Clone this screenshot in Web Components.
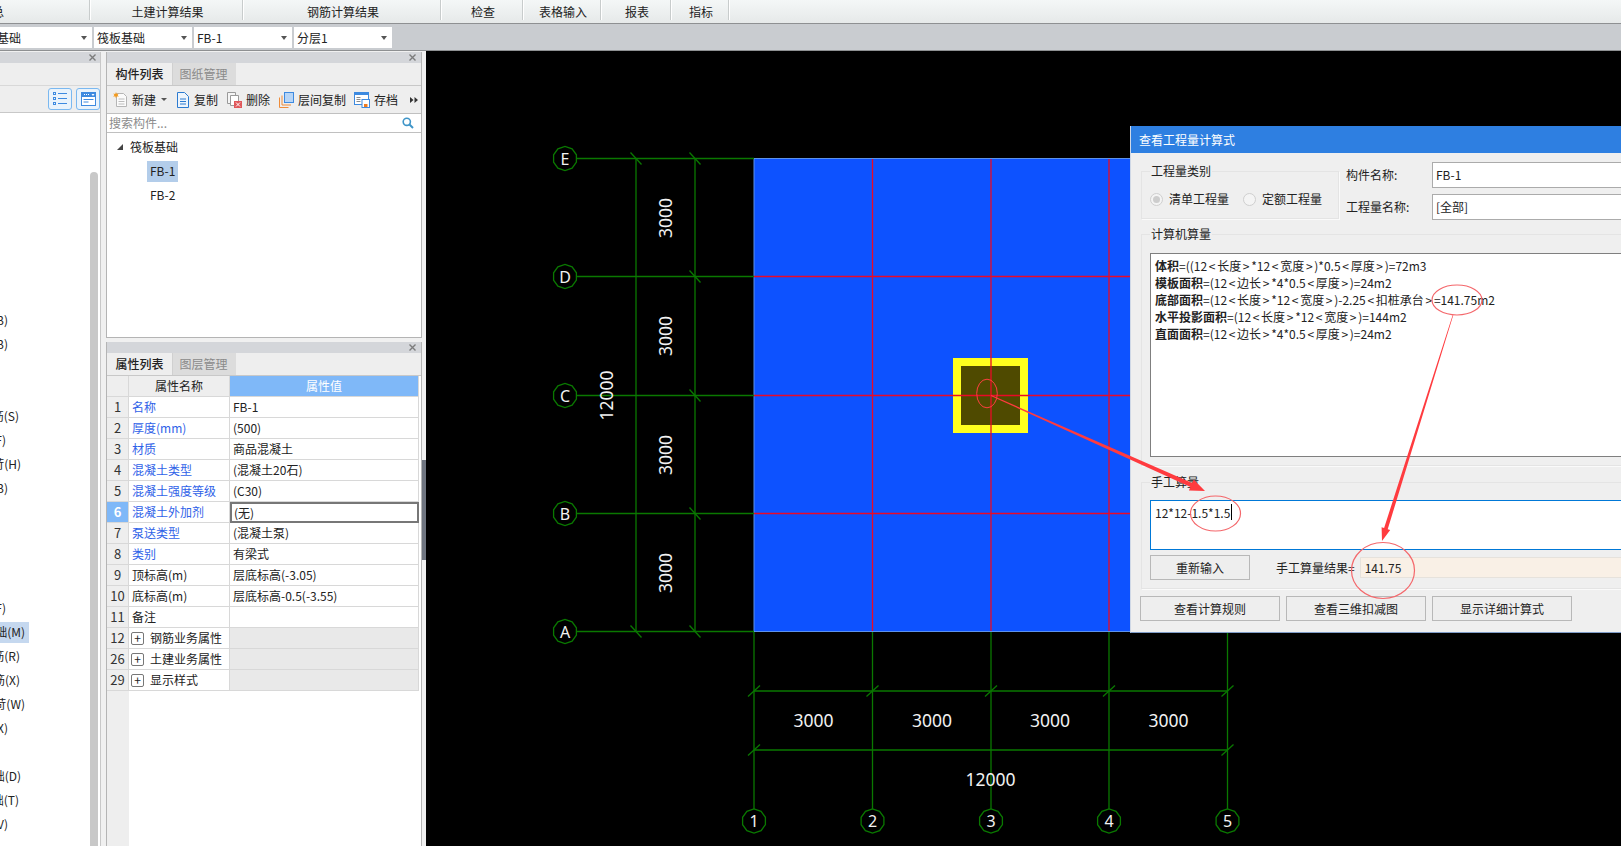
<!DOCTYPE html>
<html lang="zh">
<head>
<meta charset="utf-8">
<title>查看工程量计算式</title>
<style>
  html, body { margin: 0; height: 100%; overflow: hidden; }
  body { font: 12px/16px "Noto Sans CJK SC", "Noto Sans", sans-serif; color: #222; }
</style>
</head>
<body>
<app-shell></app-shell>

<script>
const ICONS = {
  add: `<svg width="16" height="16" viewBox="0 0 16 16"><path d="M3.5 1.5h7l3 3v10h-10z" fill="#fbfbfb" stroke="#b5b5b5"/><path d="M5.5 7h6M5.5 9.5h6M5.5 12h6" stroke="#bcbcbc"/><path d="M3 0l.8 2 2-.6-1.2 1.7 1.2 1.7-2-.6-.8 2-.8-2-2 .6 1.200-1.700-1.200-1.700 2 .6z" fill="#f39a1e"/></svg>`,
  copy: `<svg width="14" height="16" viewBox="0 0 14 16"><path d="M1.500 .5h7l4 4v11h-11z" fill="#eef5fc" stroke="#2c7bd0"/><path d="M4 7h6M4 9.500h6M4 12h6" stroke="#2c7bd0"/></svg>`,
  del: `<svg width="15" height="16" viewBox="0 0 15 16"><path d="M.5 .5h8v11h-8z" fill="#f5f5f5" stroke="#9a9a9a"/><path d="M3.500 3.500h8v10h-8z" fill="#fff" stroke="#9a9a9a"/><rect x="7" y="9" width="8" height="7" fill="#e0575a"/><path d="M9 10.500l4 4M13 10.500l-4 4" stroke="#fff"/></svg>`,
  floor: `<svg width="15" height="16" viewBox="0 0 15 16"><path d="M.5 5.500v10h9" fill="none" stroke="#ee8c3a"/><path d="M3 3.500v9.500h9" fill="none" stroke="#ee8c3a"/><rect x="5.500" y=".5" width="9" height="10" fill="#b7d5f6" stroke="#3d8ae0"/></svg>`,
  save: `<svg width="16" height="16" viewBox="0 0 16 16"><rect x=".5" y=".5" width="14" height="12" fill="#fff" stroke="#3d8ae0"/><rect x="0" y="0" width="15" height="3" fill="#3d8ae0"/><path d="M2.500 5.500h4M2.500 7.500h4M2.500 9.500h4" stroke="#8a8a8a"/><rect x="8" y="7.500" width="7.500" height="8" fill="#fff" stroke="#3d8ae0"/><rect x="10" y="12" width="3.500" height="3" fill="#ee7a1e"/></svg>`,
  search: `<svg width="12" height="12" viewBox="0 0 12 12"><circle cx="4.800" cy="4.800" r="3.600" fill="none" stroke="#3f95c8" stroke-width="1.600"/><path d="M7.500 7.500l3.500 3.500" stroke="#3f95c8" stroke-width="2"/></svg>`,
  list: `<svg width="14" height="14" viewBox="0 0 14 14" fill="none" stroke="#3d8ae0"><rect x=".5" y=".5" width="2" height="2"/><rect x=".5" y="5.500" width="2" height="2"/><rect x=".5" y="10.500" width="2" height="2"/><path d="M5 1.500h9M5 6.500h9M5 11.500h9"/></svg>`,
  win: `<svg width="15" height="14" viewBox="0 0 15 14"><rect x=".5" y=".5" width="14" height="13" fill="#fff" stroke="#3d8ae0"/><rect x="1" y="1" width="13" height="4" fill="#3d8ae0"/><path d="M3 2.500h1M5 2.500h1M7 2.500h1" stroke="#fff"/><path d="M10.500 2h3l-1.500 2z" fill="#fff"/><path d="M2.500 7.500h10M2.500 10h5" stroke="#3d8ae0"/></svg>`,
  close: `<svg width="7" height="7" viewBox="0 0 7 7"><path d="M.5 .5l6 6M6.500 .5l-6 6" stroke="#7c7c7c" stroke-width="1.400"/></svg>`,
  more: `<svg width="8" height="6" viewBox="0 0 8 6"><path d="M0 0l3.500 3-3.500 3zM4.500 0l3.500 3-3.500 3z" fill="#333"/></svg>`
}

class TopTabs extends HTMLElement {
  connectedCallback () {
    const tabs = [['总', 90, 'lead'], ['土建计算结果', 153], ['钢筋计算结果', 198], ['检查', 82], ['表格输入', 78], ['报表', 70], ['指标', 58]]
    this.attachShadow({ mode: 'open' }).innerHTML = `
      <style>
        :host { display: flex; height: 23px; border-bottom: 1px solid #8e9092;
          background: linear-gradient(#f4f7f7, #e6e9e9); overflow: hidden; }
        .tab { box-sizing: border-box; height: 20px; display: flex; align-items: center; justify-content: center;
          padding-top: 4px; padding-left: 3px; border-right: 1px solid #c8cccc; box-shadow: 1px 0 0 #fff; flex: none; }
        .lead { justify-content: flex-end; padding-right: 85px; padding-left: 0; }
      </style>
      ${tabs.map(t => `<div class="tab ${t[2] || ''}" style="width:${t[1]}px">${t[0]}</div>`).join('')}`
  }
}
customElements.define('top-tabs', TopTabs)

class SelectBar extends HTMLElement {
  connectedCallback () {
    const items = [['基础', 92, -3], ['筏板基础', 98, 3], ['FB-1', 98, 3], ['分层1', 98, 3]]
    this.attachShadow({ mode: 'open' }).innerHTML = `
      <style>
        :host { display: flex; gap: 2px; height: 26px; box-sizing: content-box; padding: 0; align-items: flex-start;
          background: #c9ccd0; border-bottom: 1px solid #8e9092; overflow: hidden; }
        .box { box-sizing: border-box; flex: none; height: 21px; margin-top: 3px; background: #fff; display: flex; align-items: center;
          justify-content: space-between; padding-right: 5px; }
        i { width: 0; height: 0; border: 3.500px solid transparent; border-top: 4px solid #555; border-bottom: 0; }
      </style>
      ${items.map(s => `<div class="box" style="width:${s[1]}px"><span style="margin-left:${s[2]}px">${s[0]}</span><i></i></div>`).join('')}`
  }
}
customElements.define('select-bar', SelectBar)

class DockPanel extends HTMLElement {
  connectedCallback () {
    const tabs = (this.getAttribute('tabs') || '').split(',').filter(Boolean)
    this.attachShadow({ mode: 'open' }).innerHTML = `
      <style>
        :host { display: flex; flex-direction: column; box-sizing: border-box; overflow: hidden;
          border-left: 1px solid #b4b4b4; border-right: 1px solid #b4b4b4; background: #fff; }
        .head { height: 11px; flex: none; background: #d4d6da; display: flex; align-items: center; justify-content: flex-end; padding-right: 5px; }
        .tabs { height: 22px; flex: none; background: #eee; display: flex; border-bottom: 1px solid #c8c8c8; }
        .tab { width: 65px; display: flex; align-items: center; justify-content: center; font-weight: 500; }
        .tab + .tab { background: #dcdcdc; color: #8a8a8a; font-weight: 400; width: 64px; border-left: 1px solid #d0d0d0; padding-right: 2px; box-sizing: border-box; }
        .body { flex: 1; min-height: 0; display: flex; flex-direction: column; }
      </style>
      <div class="head">${ICONS.close}</div>
      <div class="tabs">${tabs.map(t => `<div class="tab">${t}</div>`).join('')}</div>
      <div class="body"><slot></slot></div>`
  }
}
customElements.define('dock-panel', DockPanel)

class ComponentTools extends HTMLElement {
  connectedCallback () {
    const tools = [
      [ICONS.add, '新建', 6, 3], [ICONS.copy, '复制', 9, 4], [ICONS.del, '删除', 9, 4],
      [ICONS.floor, '层间复制', 9, 4], [ICONS.save, '存档', 8, 4]
    ]
    this.attachShadow({ mode: 'open' }).innerHTML = `
      <style>
        :host { display: flex; align-items: center; flex: none; height: 27px; background: #eee; border-bottom: 1px solid #c0c0c0; overflow: hidden; }
        .tool { display: flex; align-items: center; flex: none; }
        svg { flex: none; }
        .drop { width: 0; height: 0; border: 3px solid transparent; border-top: 3px solid #555; border-bottom: 0; margin-left: 5px; }
        .more { margin-left: 12px; display: flex; }
      </style>
      ${tools.map((t, i) => `<div class="tool" style="margin-left:${t[2]}px">${t[0]}<span style="margin-left:${t[3]}px">${t[1]}</span>${i === 0 ? '<i class="drop"></i>' : ''}</div>`).join('')}
      <span class="more">${ICONS.more}</span>`
  }
}
customElements.define('component-tools', ComponentTools)

class SearchBox extends HTMLElement {
  connectedCallback () {
    this.attachShadow({ mode: 'open' }).innerHTML = `
      <style>
        :host { display: flex; align-items: center; justify-content: space-between; flex: none; height: 18px; padding: 0 7px 0 2px;
          background: #fff; border-bottom: 1px solid #c0c0c0; color: #8c8c8c; }
      </style>
      <span>搜索构件...</span>${ICONS.search}`
  }
}
customElements.define('search-box', SearchBox)

class ComponentTree extends HTMLElement {
  connectedCallback () {
    this.attachShadow({ mode: 'open' }).innerHTML = `
      <style>
        :host { display: block; flex: 1; padding-top: 2px; background: #fff; border-bottom: 1px solid #b4b4b4; }
        .row { height: 24px; display: flex; align-items: center; }
        .root { padding-left: 10px; gap: 7px; }
        .root i { width: 0; height: 0; border-left: 6px solid transparent; border-bottom: 6px solid #444; }
        .leaf { padding-left: 40px; }
        .leaf span { display: flex; align-items: center; height: 21px; padding: 0 3px; }
        .on { background: #b3cdea; }
      </style>
      <div class="row root"><i></i><span>筏板基础</span></div>
      <div class="row leaf"><span class="on">FB-1</span></div>
      <div class="row leaf"><span>FB-2</span></div>`
  }
}
customElements.define('component-tree', ComponentTree)

class PropTable extends HTMLElement {
  constructor () {
    super()
    this.data = [
      ['1', '名称', 'FB-1', 1], ['2', '厚度(mm)', '(500)', 1], ['3', '材质', '商品混凝土', 1],
      ['4', '混凝土类型', '(混凝土20石)', 1], ['5', '混凝土强度等级', '(C30)', 1], ['6', '混凝土外加剂', '(无)', 1],
      ['7', '泵送类型', '(混凝土泵)', 1], ['8', '类别', '有梁式', 1], ['9', '顶标高(m)', '层底标高(-3.05)'],
      ['10', '底标高(m)', '层底标高-0.5(-3.55)'], ['11', '备注', '']
    ]
    this.groups = [['12', '钢筋业务属性'], ['26', '土建业务属性'], ['29', '显示样式']]
  }

  connectedCallback () {
    const rows = this.data.map(r => `
      <div class="no ${r[0] === '6' ? 'cur' : ''}">${r[0]}</div>
      <div class="cell ${r[3] ? 'link' : ''}">${r[1]}</div>
      <div class="cell val ${r[0] === '6' ? 'edit' : ''}">${r[2]}</div>`).join('')
    const groups = this.groups.map(g => `
      <div class="no">${g[0]}</div>
      <div class="cell grp"><b>+</b>${g[1]}</div>
      <div class="cell val shade"></div>`).join('')
    this.attachShadow({ mode: 'open' }).innerHTML = `
      <style>
        :host { display: block; flex: 1; background: linear-gradient(90deg, #eee 22px, #fff 22px); overflow: hidden; }
        .grid { display: grid; grid-template-columns: 22px 101px 189px; grid-auto-rows: 21px; width: 312px; }
        .grid > div { box-sizing: border-box; display: flex; align-items: center; border-bottom: 1px solid #d8d8d8; border-right: 1px solid #d8d8d8; white-space: nowrap; }
        .no { justify-content: center; background: #eee; color: #333; font-size: 13px; }
        .cur { background: #7fb8f8; color: #fff; font-weight: 700; }
        .cell { padding-left: 3px; }
        .val { padding-left: 3px; }
        .link { color: #2f62e8; }
        .hd { justify-content: center; background: #eee; padding: 0; }
        .hd.blue { background: #7fb8f8; color: #fff; }
        .edit { border: 2px solid #777 !important; padding-left: 2px; }
        .shade { background: #e9e9e9; }
        .grp { gap: 6px; padding-left: 2px; }
        .grp b { box-sizing: border-box; width: 13px; height: 13px; border: 1px solid #777; border-radius: 2px; display: flex;
          align-items: center; justify-content: center; font-weight: 400; line-height: 1; background: #fff; }
      </style>
      <div class="grid">
        <div class="no"></div><div class="hd">属性名称</div><div class="hd blue">属性值</div>
        ${rows}${groups}
      </div>`
  }
}
customElements.define('prop-table', PropTable)

class LeftPanel extends HTMLElement {
  connectedCallback () {
    const items = [
      ['B)', 8], ['B)', 8], ['', 0], ['', 0], ['筋(S)', 19], ['F)', 6], ['苛(H)', 21], ['B)', 8], ['', 0], ['', 0], ['', 0], ['', 0],
      ['F)', 6], ['础(M)', 25, 1], ['筋(R)', 20], ['筋(X)', 20], ['苛(W)', 25], ['X)', 8], ['', 0], ['础(D)', 21], ['础(T)', 19], ['V)', 8]
    ]
    this.attachShadow({ mode: 'open' }).innerHTML = `
      <style>
        :host { display: flex; flex-direction: column; flex: none; width: 101px; margin-top: 1px; background: #fff; overflow: hidden; border-right: 1px solid #c8c8c8; box-sizing: border-box; }
        .head { height: 11px; flex: none; background: #d4d6da; display: flex; align-items: center; justify-content: flex-end; padding-right: 4px; }
        .tabs { height: 22px; flex: none; background: #eee; }
        .tools { flex: none; background: #eee; border-bottom: 1px solid #c8c8c8; border-top: 1px solid #d8d8d8; box-sizing: border-box; height: 28px;
          display: flex; align-items: center; justify-content: flex-end; gap: 4px; }
        .btn { box-sizing: border-box; width: 24px; height: 22px; border: 1px solid #7ab8f0; border-radius: 3px; background: #e9f3fc; display: flex; align-items: center; justify-content: center; }
        .main { flex: 1; min-height: 0; display: flex; }
        .list { flex: 1; padding-top: 195px; overflow: hidden; }
        .row { height: 24px; display: flex; align-items: center; }
        .item { box-sizing: border-box; display: flex; justify-content: flex-end; white-space: nowrap; height: 21px; align-items: center; padding-bottom: 1px; }
        .on { background: #c5d8ef; padding-right: 4px; }
        .track { width: 8px; flex: none; margin: 59px 2px 0 0; background: #c8c8c8; border-radius: 4px 4px 0 0; }
      </style>
      <div class="head">${ICONS.close}</div>
      <div class="tabs"></div>
      <div class="tools"><div class="btn">${ICONS.list}</div><div class="btn">${ICONS.win}</div></div>
      <div class="main">
        <div class="list">
          ${items.map(i => `<div class="row">${i[0] ? `<div class="item ${i[2] ? 'on' : ''}" style="width:${i[2] ? 29 : i[1]}px">${i[0]}</div>` : ''}</div>`).join('')}
        </div>
        <div class="track"></div>
      </div>`
  }
}
customElements.define('left-panel', LeftPanel)

class CadDrawing extends HTMLElement {
  connectedCallback () {
    const xs = [754, 872.5, 991, 1109, 1227.5]
    const ys = [158.5, 276.5, 395.5, 513.5, 631.5]
    const green = '#0a7800'
    const red = '#ea0a26'
    const line = (a, b, c, d, col = green, w = 1.3) => `<line x1="${a}" y1="${b}" x2="${c}" y2="${d}" stroke="${col}" stroke-width="${w}"/>`
    const poly = (cx, cy) => {
      const pts = []
      for (let i = 0; i < 10; i++) {
        const t = Math.PI * 2 * (i + 0.5) / 10
        pts.push((cx + 12 * Math.cos(t)).toFixed(1) + ',' + (cy + 12 * Math.sin(t)).toFixed(1))
      }
      return `<polygon points="${pts.join(' ')}" fill="#000" stroke="${green}" stroke-width="1.300"/>`
    }
    const label = (x, y, t, size = 17.500, rot) =>
      `<text x="${x}" y="${y}" font-size="${size}" fill="#f2f2f2" text-anchor="middle" dominant-baseline="central"${rot ? ` transform="rotate(-90 ${x} ${y})"` : ''}>${t}</text>`

    let s = ''
    // base slab
    s += `<rect x="754" y="158.500" width="473.500" height="473" fill="#0d52ff" stroke="#5d92ea"/>`
    // column goes under the axes
    s += `<rect x="953" y="358" width="75" height="75" fill="#ffff1e"/><rect x="961" y="366" width="59" height="59" fill="#4f4a00"/>`
    // axes inside the slab
    ys.slice(1, 4).forEach(y => { s += line(754, y, 1227, y, red) })
    xs.slice(1, 4).forEach(x => { s += line(x, 159, x, 631, red) })
    s += `<ellipse cx="987" cy="393.500" rx="10.300" ry="14.300" fill="none" stroke="#ff4040"/>`
    // axes outside
    ys.forEach(y => { s += line(577, y, 754, y) })
    xs.forEach(x => { s += line(x, 632, x, 809) })
    s += line(636, 158, 636, 632) + line(695, 158, 695, 632)
    s += line(754, 691, 1228, 691) + line(754, 750, 1228, 750)
    // dimension ticks
    const back = (x, y) => line(x - 5.5, y - 6, x + 5.5, y + 6)
    const fwd = (x, y) => line(x - 6, y + 5.5, x + 6, y - 5.5)
    ;[[636, ys[0]], [636, ys[4]]].forEach(p => { s += back(p[0], p[1]) })
    ys.forEach(y => { s += back(695, y) })
    xs.forEach(x => { s += fwd(x, 691) })
    s += fwd(xs[0], 750) + fwd(xs[4], 750)
    // bubbles
    ;['E', 'D', 'C', 'B', 'A'].forEach((t, i) => { s += poly(565, ys[i]) + label(565, ys[i], t, 16) })
    xs.forEach((x, i) => { s += poly(x, 821) + label(x, 821, i + 1, 16) })
    // dimensions
    ;[218, 336, 455, 573].forEach(y => { s += label(664.5, y, '3000', 17.5, true) })
    s += label(605.5, 395.5, '12000', 17.5, true)
    ;[813.5, 932, 1050, 1168.5].forEach(x => { s += label(x, 719.5, '3000') })
    s += label(990.5, 779, '12000')

    this.attachShadow({ mode: 'open' }).innerHTML = `
      <style>
        :host { display: block; position: absolute; inset: 0; }
        svg { display: block; font-family: "Noto Sans", sans-serif; }
      </style>
      <svg width="1195" height="795" viewBox="426 51 1195 795">${s}</svg>`
  }
}
customElements.define('cad-drawing', CadDrawing)

class CalcDialog extends HTMLElement {
  connectedCallback () {
    const lines = [
      ['体积', '=((12<长度>*12<宽度>)*0.5<厚度>)=72m3'],
      ['模板面积', '=(12<边长>*4*0.5<厚度>)=24m2'],
      ['底部面积', '=(12<长度>*12<宽度>)-2.25<扣桩承台>=141.75m2'],
      ['水平投影面积', '=(12<长度>*12<宽度>)=144m2'],
      ['直面面积', '=(12<边长>*4*0.5<厚度>)=24m2']
    ]
    // the angle brackets sit wider in the original font
    const esc = t => t.replace(/[<>]/g, c => `<u>${c === '<' ? '&lt;' : '&gt;'}</u>`)
    this.attachShadow({ mode: 'open' }).innerHTML = `
      <style>
        :host { display: block; position: absolute; left: 704px; top: 75px; width: 600px; background: #efefef;
          border-left: 1px solid #cfd8e6; border-bottom: 1px solid #7f9cc8; box-sizing: border-box; }
        .title { height: 27px; background: #2e7fe1; color: #fff; display: flex; align-items: center; padding-left: 8px; }
        .body { padding: 9px 0 11px 10px; }
        fieldset { margin: 0; min-width: 0; border: 1px solid #e4e4e4; box-shadow: 1px 1px 0 #fafafa; padding: 0 0 8px 8px; }
        legend { padding: 0 1px; height: 16px; line-height: 16px; }
        .top { display: flex; height: 57px; }
        .kind { width: 198px; box-sizing: border-box; height: 56px; margin-top: 1px; flex: none; }
        .radios { display: flex; align-items: center; padding-top: 12px; }
        .radio { box-sizing: border-box; width: 13px; height: 13px; flex: none; border-radius: 50%; border: 1px solid #cfcfcf; background: #f4f4f4;
          display: flex; align-items: center; justify-content: center; margin-right: 6px; }
        .radio.on::after { content: ''; width: 7px; height: 7px; border-radius: 50%; background: #cdcdcd; }
        .names { display: grid; grid-template-columns: 86px 1fr; grid-auto-rows: 26px; row-gap: 6px; margin-left: 7px; flex: 1; align-items: center; }
        .field { box-sizing: border-box; height: 26px; background: #fff; border: 1px solid #ababab; display: flex; align-items: center; padding-left: 3px; }
        .auto { margin-top: 7px; }
        .out { box-sizing: border-box; height: 204px; margin-top: 11px; background: #fff; border: 1px solid #7f7f7f; border-right: 0; padding: 3px 4px; line-height: 17px; }
        .out b { font-weight: 700; }
        .out u { text-decoration: none; margin: 0 1.700px; }
        .hand { margin-top: 8px; }
        .in { box-sizing: border-box; height: 50px; margin-top: 10px; background: #fff; border: 1px solid #0078d7; padding: 3px 4px; line-height: 17px; display: flex; align-items: flex-start; }
        .caret { display: inline-block; width: 1px; height: 16px; background: #000; margin-left: 1px; }
        .res { display: flex; align-items: center; margin-top: 5px; height: 25px; }
        button { box-sizing: border-box; font: inherit; color: inherit; background: #eee; border: 1px solid #b8b8b8; border-radius: 0; padding: 0; }
        .again { width: 100px; height: 25px; }
        .res span { margin-left: 26px; }
        .value { flex: 1; box-sizing: border-box; height: 21px; margin-left: 5px; background: #f9f0e6; border: 1px solid #e6e2dc; display: flex; align-items: center; padding-left: 4px; }
        .foot { display: flex; gap: 6px; margin: 7px 0 0 -1px; }
        .foot button { width: 140px; height: 25px; }
      </style>
      <div class="title">查看工程量计算式</div>
      <div class="body">
        <div class="top">
          <fieldset class="kind">
            <legend>工程量类别</legend>
            <div class="radios">
              <i class="radio on"></i><span>清单工程量</span>
              <i class="radio" style="margin-left:14px"></i><span>定额工程量</span>
            </div>
          </fieldset>
          <div class="names">
            <span>构件名称:</span><div class="field">FB-1</div>
            <span>工程量名称:</span><div class="field">[全部]</div>
          </div>
        </div>
        <fieldset class="auto">
          <legend>计算机算量</legend>
          <div class="out">${lines.map(l => `<div><b>${l[0]}</b>${esc(l[1])}</div>`).join('')}</div>
        </fieldset>
        <fieldset class="hand">
          <legend>手工算量</legend>
          <div class="in"><span>12*12-1.5*1.5</span><i class="caret"></i></div>
          <div class="res">
            <button class="again">重新输入</button>
            <span>手工算量结果=</span>
            <div class="value">141.75</div>
          </div>
        </fieldset>
        <div class="foot">
          <button>查看计算规则</button><button>查看三维扣减图</button><button>显示详细计算式</button>
        </div>
      </div>`
  }
}
customElements.define('calc-dialog', CalcDialog)

class MarkupLayer extends HTMLElement {
  connectedCallback () {
    const red = '#ff3b3f'
    // tapered arrow, thin at the start and thick at the head
    const arrow = (x1, y1, x2, y2, tail, neck, hw, hl) => {
      const len = Math.hypot(x2 - x1, y2 - y1)
      const ux = (x2 - x1) / len, uy = (y2 - y1) / len
      const nx = -uy, ny = ux
      const bx = x2 - ux * hl, by = y2 - uy * hl
      const p = [
        [x1 + nx * tail, y1 + ny * tail], [bx + nx * neck, by + ny * neck], [bx + nx * hw, by + ny * hw], [x2, y2],
        [bx - nx * hw, by - ny * hw], [bx - nx * neck, by - ny * neck], [x1 - nx * tail, y1 - ny * tail]
      ]
      return `<polygon points="${p.map(q => q[0].toFixed(1) + ',' + q[1].toFixed(1)).join(' ')}" fill="${red}"/>`
    }
    const ring = (cx, cy, rx, ry) => `<ellipse cx="${cx}" cy="${cy}" rx="${rx}" ry="${ry}" fill="none" stroke="#f4676b" stroke-width="1.200"/>`
    this.attachShadow({ mode: 'open' }).innerHTML = `
      <style>
        :host { display: block; position: absolute; inset: 0; pointer-events: none; }
        svg { display: block; }
      </style>
      <svg width="1195" height="795" viewBox="426 51 1195 795">
        ${arrow(991, 395.5, 1205, 491, 0.4, 2.2, 6, 15)}
        ${arrow(1453, 315, 1382, 541, 0.3, 1.900, 4.500, 13)}
        ${ring(1457, 300, 25, 15)}
        ${ring(1215.5, 513.5, 25, 17.5)}
        ${ring(1383, 570.5, 31.5, 28)}
      </svg>`
  }
}
customElements.define('markup-layer', MarkupLayer)

class AppShell extends HTMLElement {
  connectedCallback () {
    this.attachShadow({ mode: 'open' }).innerHTML = `
      <style>
        :host { display: flex; flex-direction: column; width: 1621px; height: 846px; overflow: hidden; background: #f0f0f0; }
        .main { flex: 1; min-height: 0; display: flex; }
        .gap { width: 5px; flex: none; }
        .docks { width: 316px; flex: none; display: flex; flex-direction: column; padding-top: 1px; box-sizing: border-box; }
        .upper { height: 286px; flex: none; }
        .lower { flex: 1; min-height: 0; margin-top: 4px; }
        .sash { width: 4px; flex: none; padding-top: 409px; box-sizing: border-box; }
        .sash div { height: 100px; background: #6f7580; }
        .canvas { flex: 1; position: relative; background: #000; overflow: hidden; }
      </style>
      <top-tabs></top-tabs>
      <select-bar></select-bar>
      <div class="main">
        <left-panel></left-panel>
        <div class="gap"></div>
        <div class="docks">
          <dock-panel class="upper" tabs="构件列表,图纸管理">
            <component-tools></component-tools>
            <search-box></search-box>
            <component-tree></component-tree>
          </dock-panel>
          <dock-panel class="lower" tabs="属性列表,图层管理">
            <prop-table></prop-table>
          </dock-panel>
        </div>
        <div class="sash"><div></div></div>
        <div class="canvas">
          <cad-drawing></cad-drawing>
          <calc-dialog></calc-dialog>
          <markup-layer></markup-layer>
        </div>
      </div>`
  }
}
customElements.define('app-shell', AppShell)
</script>
</body>
</html>
